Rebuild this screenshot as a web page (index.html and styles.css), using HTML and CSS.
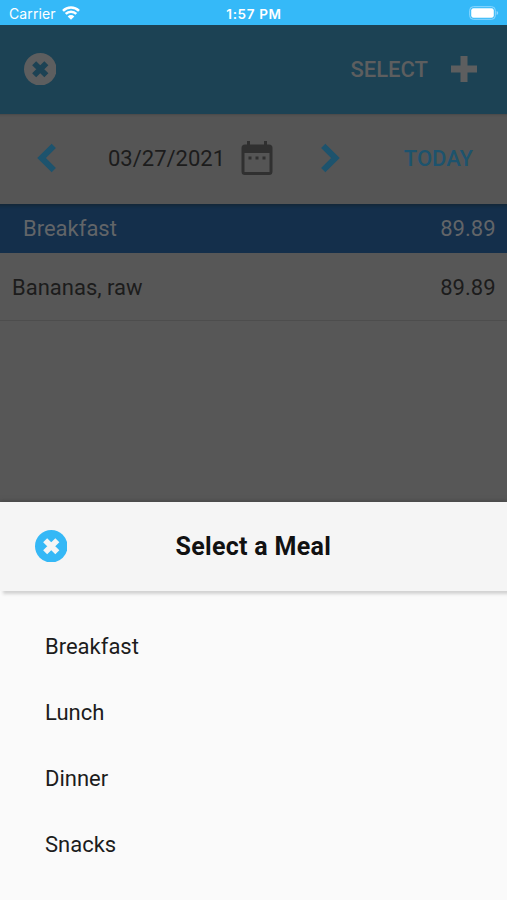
FILE: index.html
```html
<!DOCTYPE html>
<html lang="en">
<head>
  <meta charset="UTF-8">
  <title>Food Diary</title>
  <link rel="stylesheet" href="styles.css">
</head>
<body>

  <div class="status-bar">
    <div class="carrier">
      <span>Carrier</span>
      <svg class="wifi" viewBox="0 0 18 14">
        <path d="M1 4.8a11.4 11.4 0 0 1 16 0M3.7 7.9a7.5 7.500 0 0 1 10.600 0" fill="none" stroke="#fff" stroke-width="2.5"/>
        <path d="M5.7 10.4a4.7 4.7 0 0 1 6.6 0L9 13.8z" fill="#fff"/>
      </svg>
    </div>
    <span class="clock">1:57 PM</span>
    <svg class="battery" viewBox="0 0 30 14">
      <rect x="0.7" y="0.7" width="25.6" height="12.6" rx="3.6" fill="none" stroke="#8fd8ff" stroke-width="1"/>
      <rect x="2.2" y="2.2" width="22.6" height="9.6" rx="2.2" fill="#fff"/>
      <path d="M27.6 5v4q1.6-.6 1.6-2t-1.6-2z" fill="#8fd8ff"/>
    </svg>
  </div>

  <!-- diary page, dimmed while the meal sheet is open -->
  <div class="page">
    <div class="toolbar">
      <svg class="close" viewBox="0 0 32 32">
        <circle cx="16" cy="16" r="16" fill="#5d5e5f"/>
        <path d="M10 10l12 12M22 10L10 22" stroke="#1c4254" stroke-width="5.6"/>
      </svg>
      <span class="select">SELECT</span>
      <svg class="plus" viewBox="0 0 26 26">
        <path d="M13 0v26M0 13h26" stroke="#5d5e5f" stroke-width="7"/>
      </svg>
    </div>

    <div class="date-bar">
      <svg class="arrow" viewBox="0 0 20 30">
        <path d="M16.8 2.8L4.5 15l12.3 12.2" fill="none" stroke="#1d536d" stroke-width="6"/>
      </svg>
      <span class="date">03/27/2021</span>
      <svg class="calendar" viewBox="0 0 32 34">
        <path d="M4 3.4h2V0h3v3.4h14V0h3v3.4h2A3.5 3.5 0 0 1 31.500 6.900v23.600A3.500 3.500 0 0 1 28 34H4a3.500 3.500 0 0 1-3.500-3.500V6.900A3.500 3.500 0 0 1 4 3.400zM3.500 12v19h25V12z" fill="#303030" fill-rule="evenodd"/>
        <path d="M7.500 15.500h3v3h-3zM14.500 15.500h3v3h-3zM21.500 15.500h3v3h-3z" fill="#303030"/>
      </svg>
      <svg class="arrow next" viewBox="0 0 20 30">
        <path d="M3.2 2.8L15.5 15 3.2 27.2" fill="none" stroke="#1d536d" stroke-width="6"/>
      </svg>
      <span class="today">TODAY</span>
    </div>

    <div class="meal-row">
      <span>Breakfast</span>
      <span class="amount">89.89</span>
    </div>
    <div class="food-row">
      <span class="food">Bananas, raw</span>
      <span class="amount">89.89</span>
    </div>
  </div>

  <div class="sheet">
    <div class="sheet-header">
      <svg class="close" viewBox="0 0 32 32">
        <circle cx="16" cy="16" r="16" fill="#35b8f6"/>
        <path d="M10 10l12 12M22 10L10 22" stroke="#f5f5f5" stroke-width="5.6"/>
      </svg>
      <h2>Select a Meal</h2>
    </div>
    <ul class="meals">
      <li>Breakfast</li>
      <li>Lunch</li>
      <li>Dinner</li>
      <li>Snacks</li>
    </ul>
  </div>

</body>
</html>
```
FILE: styles.css
```css
* {
  box-sizing: border-box;
}

body {
  margin: 0;
  height: 900px;
  display: flex;
  flex-direction: column;
  overflow: hidden;
  font-family: Roboto, sans-serif;
  font-size: 22px;
  color: #1c1c1c;
  background-color: #575757;
}

svg {
  display: block;
  flex-shrink: 0;
}

.status-bar {
  height: 25px;
  display: grid;
  grid-template-columns: 1fr auto 1fr;
  align-items: center;
  padding: 2px 8px 0 9px;
  background-color: #35b9f8;
  color: #fff;
  font-family: Inter, sans-serif;
  font-size: 14px;
}

.carrier {
  display: flex;
  align-items: center;
  gap: 6px;
}

.carrier span {
  letter-spacing: 0.1px;
}

.wifi {
  width: 18px;
  height: 14px;
  margin-bottom: 1px;
}

.clock {
  font-size: 13.5px;
  font-weight: 600;
  letter-spacing: 0.65px;
}

.battery {
  width: 30px;
  height: 14px;
  margin-bottom: 1px;
  justify-self: end;
}

.page {
  flex: 1;
}

.toolbar {
  height: 89px;
  display: flex;
  align-items: center;
  padding: 0 30px 1px 23.5px;
  background-color: #1c4254;
  color: #5d5e5f;
}

.close {
  width: 32.5px;
  height: 32.5px;
}

.select {
  margin-left: auto;
  padding-top: 1px;
  font-weight: 500;
}

.plus {
  width: 26px;
  height: 26px;
  margin-left: 23px;
}

.date-bar {
  height: 90px;
  display: flex;
  align-items: center;
  padding: 0 34px 2px 37px;
  background-color: #555;
  box-shadow: inset 0 3px 2px -2px #484848;
}

.arrow {
  width: 20px;
  height: 30px;
}

.date {
  width: 117px;
  margin-left: 51px;
}

.calendar {
  width: 32px;
  height: 34px;
  margin-left: 16px;
}

.next {
  margin-left: 47px;
}

.today {
  margin-left: auto;
  font-weight: 500;
  color: #1d536d;
}

.meal-row {
  height: 49px;
  display: flex;
  align-items: center;
  justify-content: space-between;
  padding: 0 11.5px 0 23px;
  background-color: #142f4b;
  color: #626568;
  box-shadow: inset 0 5px 3px -3px #142838;
}

.food-row {
  height: 68px;
  display: flex;
  align-items: center;
  justify-content: space-between;
  padding: 1px 11.5px 0 12px;
  border-bottom: 1px solid #4d4d4d;
}

.sheet {
  height: 398px;
  background-color: #fafafa;
  box-shadow: 0 -1px 4px #444;
}

.sheet-header {
  height: 89px;
  display: flex;
  align-items: center;
  padding: 0 34.5px 1px;
  background-color: #f5f5f5;
  box-shadow: 3px 3px 3px #d2d2d2;
}

.sheet-header h2 {
  margin: 0 0 0 108.5px;
  font-size: 25px;
  font-weight: 700;
  letter-spacing: 0.3px;
  color: #111;
}

.meals {
  margin: 0;
  padding: 23px 45px 0;
  list-style: none;
}

.meals li {
  height: 66px;
  line-height: 66px;
}
```
